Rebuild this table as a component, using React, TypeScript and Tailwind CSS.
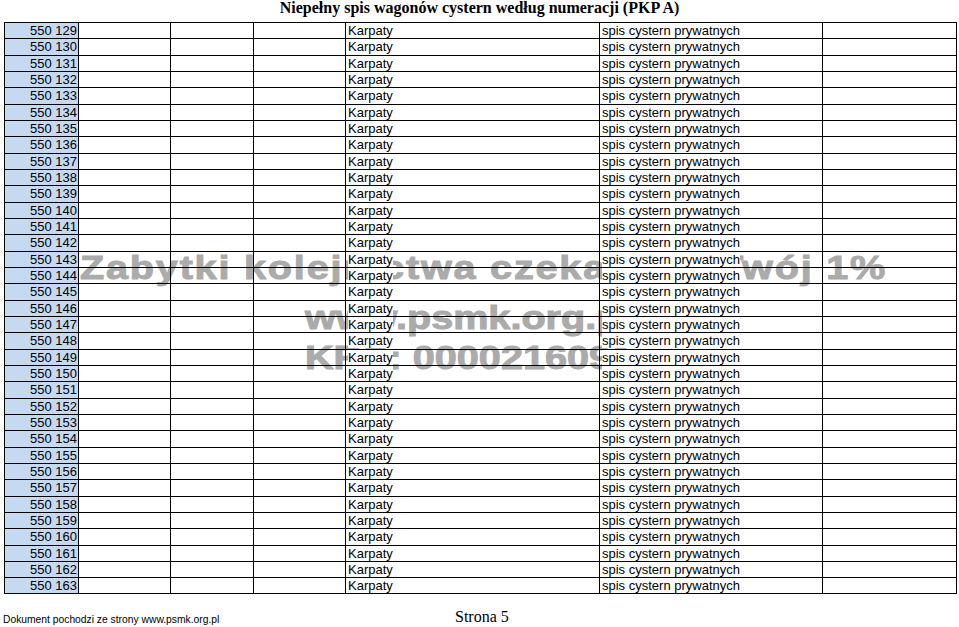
import React from "react";

const rows = Array.from({ length: 35 }, (_, i) => `550 ${129 + i}`);

export default function App() {
  return (
    <div className="relative w-[959px] h-[627px] overflow-hidden bg-white text-black">
      {/* tytuł */}
      <div className="h-[22px] text-center font-['Liberation_Serif',serif] font-bold text-[16px] leading-[16px]">
        Niepełny spis wagonów cystern według numeracji (PKP A)
      </div>

      {/* znak wodny pod tabelą */}
      <div className="absolute inset-0 z-0 font-['Liberation_Sans',sans-serif] font-bold text-[#ababab] [-webkit-text-stroke:1px_#ababab] pointer-events-none">
        <div className="absolute left-[80px] top-[246px] origin-left scale-x-[1.2] text-[33px] leading-[44px] tracking-[1.5px] whitespace-nowrap">
          Zabytki kolejnictwa czekają na Twój 1%
        </div>
        <div className="absolute left-[305px] top-[296px] origin-left scale-x-[1.2] text-[33px] leading-[44px] whitespace-nowrap">
          www.psmk.org.pl
        </div>
        <div className="absolute left-[305px] top-[336px] origin-left scale-x-[1.2] text-[33px] leading-[44px] whitespace-nowrap">
          KRS: 0000216091
        </div>
      </div>

      {/* tabela */}
      <div className="relative z-10 ml-[4px] w-[953px] border-l border-t border-black font-['Liberation_Sans',sans-serif] text-[13px]">
        {rows.map((nr) => (
          <div key={nr} className="grid grid-cols-[74px_92px_83px_92px_254px_223px_134px] h-[16.34px] leading-[15px]">
            <div className="bg-[#c5d9f1] border-r border-b border-black text-right pr-[1px]">{nr}</div>
            <div className="border-r border-b border-black" />
            <div className="border-r border-b border-black" />
            <div className="border-r border-b border-black" />
            <div className="border-r border-b border-black pl-[2px]">
              <span className="bg-white">Karpaty</span>
            </div>
            <div className="border-r border-b border-black pl-[2px]">
              <span className="bg-white">spis cystern prywatnych</span>
            </div>
            <div className="border-r border-b border-black" />
          </div>
        ))}
      </div>

      {/* stopka */}
      <div className="relative flex items-end mt-[14px] h-[20px]">
        <div className="pl-[3px] font-['Liberation_Sans',sans-serif] text-[10.3px] leading-[14px] pb-[1px]">
          Dokument pochodzi ze strony www.psmk.org.pl
        </div>
        <div className="absolute left-[455px] top-0 font-['Liberation_Serif',serif] text-[16px] leading-[18px]">
          Strona 5
        </div>
      </div>
    </div>
  );
}
